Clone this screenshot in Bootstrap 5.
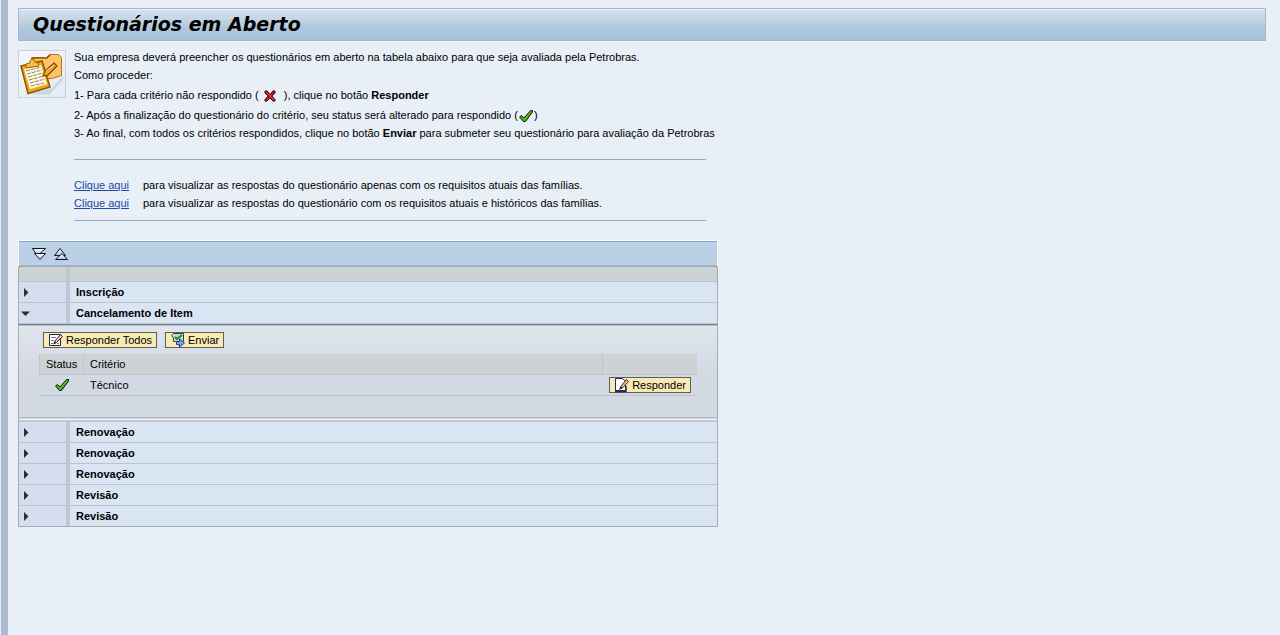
<!DOCTYPE html>
<html lang="pt-BR">
<head>
<meta charset="utf-8">
<meta name="viewport" content="width=device-width, initial-scale=1">
<title>Questionários em Aberto</title>
<link href="https://cdn.jsdelivr.net/npm/bootstrap@5.3.0/dist/css/bootstrap.min.css" rel="stylesheet">
<style>
body{background:#e8eff7;color:#000;font:11px/18px "Liberation Sans",Arial,sans-serif}
.page-main{margin-left:1px;border-left:7px solid #adbbce;padding:8px 14px 0 10px}
.page-title{font:italic bold 19px/31px "DejaVu Sans",Verdana,sans-serif;border:1px solid #a5b7ca;padding:0 14px;background:linear-gradient(#d6e4f1,#b9cddd 50%,#aec8de 62%,#a9c1dc);box-shadow:inset 0 1px #e6f0fa}
.content{max-width:700px}
.intro{padding-top:7px}
.intro-icon{width:48px;height:48px;border:1px solid #c5d3e1;background:linear-gradient(135deg,#f5f7fa,#e4ebf3);margin-top:2px}
.step-tall{line-height:22px}
.rule{border:0;border-top:1px solid #94a9c8;opacity:1;width:632px;max-width:100%;margin:17px 0 16px}
.rule.last{margin:8px 0 19px}
a.aqui{color:#1c4aa8;width:69px;flex:none}
.bar{height:26px;background:#b9d0e7;border:1px solid #fff;border-bottom:0;box-shadow:inset 0 1px #86a2bf,inset 0 -1px #9fb4ca;padding:0 12px;gap:6px}
.tool{border:0;background:none;padding:0;width:16px;height:16px;display:flex}
.groups{table-layout:fixed;border-collapse:separate;border-spacing:0;border:1px solid #a6abb0}
.groups td,.groups th{padding:0}
.groups .ctl{width:51px;background:#d4deef;border-right:4px solid #bfc6d4}
.groups .line>*{height:21px;line-height:20px;border-bottom:1px solid #b9c3d2}
.groups .line>.name{background:#d9e5f3;padding-left:6px;text-align:left}
.groups .head>*{height:15px;background:#cdd2d5;border-bottom:1px solid #b9c3d2}
.groups .line.end>*{height:20px;border-bottom:0}
.toggle{border:0;background:none;padding:0 0 0 2px;width:100%;height:20px;display:flex;align-items:center}
.groups td.detail{border-top:1px solid #747e90;box-shadow:inset 0 1px #b9bec8;background:linear-gradient(#dfe5ed,#d2d9e2 55%);padding:7px 20px 21px}
.edge{height:5px;border-top:1px solid #b5bbc3;background:linear-gradient(#cdd3da 1px,#f8fafc 1px,#f8fafc 2px,#bfc6d2 2px)}
.btn-sap{font-size:11px;line-height:14px;height:16px;color:#000;background:#f7ebb3;border:1px solid #5e5e58;border-radius:0;padding:0 4px;display:inline-flex;align-items:center;gap:2px;white-space:nowrap}
.btn-sap:hover{background:#fbf3cb;color:#000;border-color:#5e5e58}
.criteria{border-collapse:separate;border-spacing:0;table-layout:fixed;margin-top:6px}
.criteria th,.criteria td{height:21px;line-height:20px;border-bottom:1px solid #bcc4d0}
.criteria th{font-weight:400;background:#cdd2d5;border-left:1px solid #bcc4d0;padding:0 6px}
.criteria td{padding:0 6px 0 7px}
.c-status{width:44px}.c-act{width:95px}
svg{display:block;flex:none}
svg.inl{display:inline-block;vertical-align:middle}
</style>
</head>
<body>
<svg width="0" height="0" class="position-absolute" aria-hidden="true">
<defs>
<linearGradient id="blue" x2="0" y2="1"><stop stop-color="#fff"/><stop offset="1" stop-color="#a8c6ee"/></linearGradient>
<symbol id="ok" viewBox="0 0 16 16"><path d="M1.500 9 3.500 7.500 6 10 12.500 2.500 14.500 2.500 14.500 4 7.500 13.500 5.500 13.500Z" fill="#4fa81c" stroke="#061c00"/><path d="M3.500 9 6 11.500 13 3.500" fill="none" stroke="#78c834" stroke-width=".8"/></symbol>
<symbol id="no" viewBox="0 0 16 16"><path d="M3 3h2L8 6.500 11 3h2v2L9.800 8l3.200 3.500V13h-2L8 9.800 5 13H3v-1.500L6.200 8 3 5Z" fill="#e3131d" stroke="#160808"/><path d="M4 4l8 8" stroke="#fb6464" stroke-width=".6"/></symbol>
<symbol id="pen" viewBox="0 0 16 16"><path d="M1.500 2.500h11v11h-11Z" fill="#fff" stroke="#262b44"/><path d="M3 5.500h5M3 8.500h3M3 11.500h2M9 11.500h2" stroke="#6f789a"/><path d="M6 11.500 7 9 12.500 2.500 14.500 4.500 8.500 10.500Z" fill="#f0c6a4" stroke="#30283a"/><path d="M5 12.500 7 9.500 8.500 11Z" fill="#27273e"/></symbol>
<symbol id="sheet" viewBox="0 0 16 16"><path d="M1.500 1.500h7l3 3v9h-10Z" fill="#fff" stroke="#292d4b"/><path d="M1 14.500h11V9" fill="none" stroke="#292d4b" stroke-width="1.500"/><path d="M6 11.500 7 9 12.500 2.500 14.500 4.500 9 10.500Z" fill="#efb184" stroke="#382d36"/><path d="M5 13 6.500 9.500 9 11Z" fill="#292d4b"/></symbol>
<symbol id="send" viewBox="0 0 16 16"><path d="M3.500 1.500h10v8h-3l-3 2-2-2h-2V6l-2-2.500Z" fill="#b9ddbd" stroke="#38404f"/><path d="m5 5 2 2 5-4" fill="none" stroke="#267a38" stroke-width="1.800"/><path d="M6.500 9.500h3v-2.500l5 4-5 4v-2.500h-3Z" fill="#70a4ef" stroke="#243c87"/></symbol>
<symbol id="right" viewBox="0 0 9 9"><path d="M3 0v9l4.500-4.500Z" fill="#282d43"/></symbol>
<symbol id="down" viewBox="0 0 9 9"><path d="M0 2.500h9L4.500 7Z" fill="#282d43"/></symbol>
</defs></svg>
<main class="page-main min-vh-100">
<h1 class="page-title mb-0">Questionários em Aberto</h1>
<div class="content">
<section class="intro d-flex gap-2">
<svg class="intro-icon" viewBox="1 1 46 46" role="img" aria-label="Questionários"><path d="M12 44 34 38 45 26V30L31 45Z" fill="#cbd6e5"/><path d="M13.500 29V7.500h15l3-3h9l3 3v18l-9 3Z" fill="#ffc16a" stroke="#b97810"/><path d="M14 8h15l3-3" fill="none" stroke="#8d5808" stroke-width="1.500"/><path d="M3 16 24 11 32 37 10 43.500Z" fill="#f1a91c" stroke="#875606" stroke-width="1.500"/><path d="M6 19 23 15 29 34 12 39Z" fill="#fff8df"/><path d="m8 21 15-4m-14 7 15-4m-14 7 15-4m-14 7 15-4m-14 7 15-4m-14 7 13-3" stroke="#8d856a" stroke-dasharray="4 1"/><path d="M8 18v-4l4-1c-1-5 5-5 5-1l3 1 1 3Z" fill="#f8bd3f" stroke="#9b6205"/><path d="M25 26 27 21 36 13 39 16 30 25Z" fill="#f2aa2a" stroke="#704600" stroke-width="1.200"/><path d="m28 21 8-6" stroke="#ffda8b"/></svg>
<div class="flex-grow-1">
<div>Sua empresa deverá preencher os questionários em aberto na tabela abaixo para que seja avaliada pela Petrobras.</div>
<div>Como proceder:</div>
<div class="step-tall">1- Para cada critério não respondido ( <svg class="inl" width="16" height="16" role="img" aria-label="não respondido"><use href="#no"/></svg> &nbsp;), clique no botão <b>Responder</b></div>
<div>2- Após a finalização do questionário do critério, seu status será alterado para respondido (<svg class="inl" width="16" height="16" role="img" aria-label="respondido"><use href="#ok"/></svg>)</div>
<div>3- Ao final, com todos os critérios respondidos, clique no botão <b>Enviar</b> para submeter seu questionário para avaliação da Petrobras</div>
<hr class="rule">
<div class="d-flex"><div class="flex-shrink-0"><a class="aqui d-inline-block" href="#">Clique aqui</a></div><span>para visualizar as respostas do questionário apenas com os requisitos atuais das famílias.</span></div>
<div class="d-flex"><div class="flex-shrink-0"><a class="aqui d-inline-block" href="#">Clique aqui</a></div><span>para visualizar as respostas do questionário com os requisitos atuais e históricos das famílias.</span></div>
<hr class="rule last">
</div>
</section>
<section>
<div class="bar d-flex align-items-center">
<button class="tool" type="button" aria-label="Expandir tudo"><svg width="16" height="16"><path d="M1.500 2.500h13L8 8.500H5.500Z" fill="url(#blue)" stroke="#10131c"/><path d="M3.500 7.500h11L9 13.500Z" fill="url(#blue)" stroke="#10131c"/></svg></button>
<button class="tool" type="button" aria-label="Recolher tudo"><svg width="16" height="16"><path d="M1.500 9.500 7 2.500l5.500 7Z" fill="url(#blue)" stroke="#10131c"/><path d="M2.500 13.500 9 7.500l5.500 6Z" fill="url(#blue)" stroke="#10131c"/></svg></button>
</div>
<table class="groups w-100">
<thead><tr class="head"><td class="ctl"></td><td></td></tr></thead>
<tbody>
<tr class="line"><td class="ctl"><button class="toggle" type="button" aria-label="Expandir"><svg width="9" height="9"><use href="#right"/></svg></button></td><th class="name">Inscrição</th></tr>
<tr class="line"><td class="ctl"><button class="toggle" type="button" aria-label="Recolher"><svg width="9" height="9"><use href="#down"/></svg></button></td><th class="name">Cancelamento de Item</th></tr>
<tr><td class="detail" colspan="2">
<div class="d-flex gap-2 ps-1"><button type="button" class="btn btn-sap"><svg width="16" height="16"><use href="#pen"/></svg>Responder Todos</button><button type="button" class="btn btn-sap"><svg width="16" height="16"><use href="#send"/></svg>Enviar</button></div>
<table class="criteria w-100">
<thead><tr><th class="c-status">Status</th><th>Critério</th><th class="c-act"></th></tr></thead>
<tbody><tr><td><svg class="mx-auto" width="16" height="16" role="img" aria-label="Respondido"><use href="#ok"/></svg></td><td>Técnico</td><td><div class="d-flex justify-content-end"><button type="button" class="btn btn-sap"><svg width="16" height="16"><use href="#sheet"/></svg>Responder</button></div></td></tr></tbody>
</table></td></tr>
<tr><td colspan="2"><div class="edge"></div></td></tr>
<tr class="line"><td class="ctl"><button class="toggle" type="button" aria-label="Expandir"><svg width="9" height="9"><use href="#right"/></svg></button></td><th class="name">Renovação</th></tr>
<tr class="line"><td class="ctl"><button class="toggle" type="button" aria-label="Expandir"><svg width="9" height="9"><use href="#right"/></svg></button></td><th class="name">Renovação</th></tr>
<tr class="line"><td class="ctl"><button class="toggle" type="button" aria-label="Expandir"><svg width="9" height="9"><use href="#right"/></svg></button></td><th class="name">Renovação</th></tr>
<tr class="line"><td class="ctl"><button class="toggle" type="button" aria-label="Expandir"><svg width="9" height="9"><use href="#right"/></svg></button></td><th class="name">Revisão</th></tr>
<tr class="line end"><td class="ctl"><button class="toggle" type="button" aria-label="Expandir"><svg width="9" height="9"><use href="#right"/></svg></button></td><th class="name">Revisão</th></tr>
</tbody></table>
</section>
</div>
</main>
<script src="https://cdn.jsdelivr.net/npm/bootstrap@5.3.0/dist/js/bootstrap.bundle.min.js"></script>
</body>
</html>
